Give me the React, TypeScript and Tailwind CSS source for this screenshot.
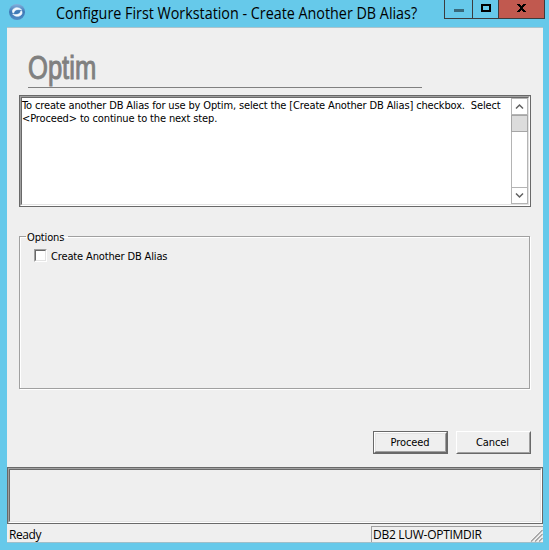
const grip = [
  [1, 12, 12, 1],
  [5, 12, 12, 5],
  [9, 12, 12, 9],
];

function TitleBar() {
  return (
    <header className="flex h-[27px] items-start">
      <svg className="ml-[9px] mt-[4px] shrink-0" width="16" height="16" viewBox="0 0 16 16">
        <defs>
          <linearGradient id="orb" x1="0" y1="0" x2="0" y2="1">
            <stop offset="0" stopColor="#86b0dc" />
            <stop offset="0.5" stopColor="#3c78b6" />
            <stop offset="1" stopColor="#4f8cc6" />
          </linearGradient>
        </defs>
        <circle cx="8" cy="8" r="8" fill="url(#orb)" />
        <path d="M4 9C2.200 6 5 3.700 8 3.700c2 0 3.700.8 4.500 2.300C9.500 4.700 5.500 5.400 5 8.600Z" fill="#f4faff" stroke="#f4faff" strokeWidth="0.6" />
        <path d="M12.500 6.800c1.800 3-.8 5.500-3.900 5.500-2 0-4-.8-4.900-2.300 3 1.200 7.400.6 8-2.700Z" fill="#f4faff" stroke="#f4faff" strokeWidth="0.6" />
      </svg>
      <h1 className="ml-[31px] h-[27px] w-[388px] origin-left scale-x-[0.895] whitespace-nowrap text-[16px] leading-[26px]">
        Configure First Workstation - Create Another DB Alias?
      </h1>
      <div className="flex h-[19px] w-[101px] shrink-0 border-x border-b border-[#3c3c3e]">
        <div className="flex w-[27px] justify-center pt-[9px]">
          <i className="block h-[3px] w-[10px] bg-[#386a7c]" />
        </div>
        <div className="flex w-[27px] justify-center border-x border-[#3c3c3e] pt-[4px]">
          <i className="block h-[8px] w-[10px] border-2 border-black" />
        </div>
        <div className="flex flex-1 justify-center bg-[#c1594f] pt-[4px]">
          <svg width="9" height="8" viewBox="0 0 9 8" shapeRendering="crispEdges">
            <path d="M0 0h3v1h1v1h1v-1h1v-1h3v1h-1v1h-1v1h-1v2h1v1h1v1h1v1h-3v-1h-1v-1h-1v1h-1v1h-3v-1h1v-1h1v-1h1v-2h-1v-1h-1v-1h-1z" />
          </svg>
        </div>
      </div>
    </header>
  );
}

function ScrollArrow({ down = false }: { down?: boolean }) {
  return (
    <div className="flex h-[17px] w-[17px] items-center justify-center border border-[#b4b4b4] bg-white">
      <svg width="9" height="7" viewBox="0 0 9 7">
        <path d={down ? "M1 1.500 4.500 5 8 1.500" : "M1 5.500 4.500 2 8 5.500"} fill="none" stroke="#606060" strokeWidth="1.500" />
      </svg>
    </div>
  );
}

function MessageBox() {
  return (
    <div className="ml-[12px] mt-[7px] h-[112px] w-[512px] border border-[#696969]">
      <div className="h-full border border-b-white border-l-[#a0a0a0] border-r-white border-t-[#a0a0a0]">
        <div className="flex h-full border border-b-[#e3e3e3] border-l-[#696969] border-r-[#e3e3e3] border-t-[#696969] bg-white">
          <div className="w-[489px] whitespace-pre pt-px text-[11px] leading-[13px] tracking-[-0.14px]">
            <p>To create another DB Alias for use by Optim, select the [Create Another DB Alias] checkbox.  Select</p>
            <p>{"<Proceed> to continue to the next step."}</p>
          </div>
          <div className="flex w-[17px] flex-col border-x border-[#b4b4b4]">
            <div className="-mx-px flex h-full flex-col">
              <ScrollArrow />
              <div className="h-[17px] w-[17px] border border-[#a6a6a6] bg-[#dcdcdc]" />
              <div className="flex-1" />
              <ScrollArrow down />
            </div>
          </div>
        </div>
      </div>
    </div>
  );
}

export default function App() {
  return (
    <div className="h-[550px] w-[549px] overflow-hidden bg-[#66c9ea] font-['DejaVu_Sans_Condensed','DejaVu_Sans',sans-serif] text-[11px] text-black">
      <div className="font-['Open_Sans',sans-serif]">
        <TitleBar />
      </div>
      <main className="ml-[7px] flex h-[516px] w-[536px] flex-col border-y border-b-[#9fbfca] border-t-[#a9c4cd] bg-[#efefef]">
        <div className="ml-[21px] h-[60px] w-[394px] border-b border-[#808080]">
          <div className="origin-left scale-x-[0.775] whitespace-nowrap pt-[20px] font-['Liberation_Sans_Narrow','Liberation_Sans',sans-serif] text-[33px] leading-[40px] text-[#808080] [-webkit-text-stroke:1px_#808080]">
            Optim
          </div>
        </div>
        <MessageBox />
        <fieldset className="ml-[12px] mt-[23px] h-[159px] w-[511px] border border-[#a0a0a0] px-[6px] pt-0 shadow-[1px_1px_0_#fff,inset_1px_1px_0_#fff]">
          <legend className="h-[13px] w-[42px] whitespace-nowrap pl-[1px] text-[11px] leading-[15px] tracking-[-0.14px]">Options</legend>
          <label className="ml-[8px] mt-[6px] flex items-center">
            <span className="h-[13px] w-[13px] border border-b-white border-l-[#a0a0a0] border-r-white border-t-[#a0a0a0]">
              <span className="block h-[11px] w-[11px] border border-b-[#e3e3e3] border-l-[#696969] border-r-[#e3e3e3] border-t-[#696969] bg-white" />
            </span>
            <span className="ml-[4px] h-[13px] whitespace-nowrap leading-[15px] tracking-[-0.14px]">Create Another DB Alias</span>
          </label>
        </fieldset>
        <div className="ml-[366px] mt-[42px] flex gap-[8px] tracking-[-0.1px]">
          <button className="h-[23px] w-[75px] border border-[#696969]">
            <span className="flex h-full items-center justify-center border border-b-[#696969] border-l-white border-r-[#696969] border-t-white">
              <span className="flex h-full w-full items-center justify-center border border-b-[#a0a0a0] border-l-[#e3e3e3] border-r-[#a0a0a0] border-t-[#e3e3e3] pr-px pt-[2px]">Proceed</span>
            </span>
          </button>
          <button className="h-[23px] w-[75px] border border-b-[#696969] border-l-white border-r-[#696969] border-t-white">
            <span className="flex h-full items-center justify-center border border-b-[#a0a0a0] border-l-[#efefef] border-r-[#a0a0a0] border-t-[#efefef] pr-[2px] pt-[2px]">Cancel</span>
          </button>
        </div>
        <div className="mt-[13px] h-[57px] w-[536px] border border-[#696969]">
          <div className="h-full border border-b-white border-l-[#a0a0a0] border-r-white border-t-[#a0a0a0]">
            <div className="h-full border border-b-[#e3e3e3] border-l-[#696969] border-r-[#e3e3e3] border-t-[#696969]" />
          </div>
        </div>
        <footer className="flex h-[18px] pt-[2px] font-['Open_Sans',sans-serif] text-[12px]">
          <div className="w-[364px] pl-[2px] leading-[18px] tracking-[-0.4px]">Ready</div>
          <div className="flex h-[16px] flex-1 justify-between border-l border-t border-[#a0a0a0] pl-px">
            <span className="whitespace-nowrap leading-[16px] tracking-[-0.28px]">DB2 LUW-OPTIMDIR</span>
            <svg className="mt-[2px] shrink-0" width="13" height="13" viewBox="0 0 13 13">
              {grip.map(([x1, y1, x2, y2]) => (
                <g key={x1} fill="none">
                  <path d={`M${x1 - 1} ${y1}L${x2} ${y2 - 1}`} stroke="#fff" strokeWidth="1" />
                  <path d={`M${x1} ${y1 + 0.5}L${x2 + 0.5} ${y2}`} stroke="#a0a0a0" strokeWidth="1.500" />
                </g>
              ))}
            </svg>
          </div>
        </footer>
      </main>
    </div>
  );
}
